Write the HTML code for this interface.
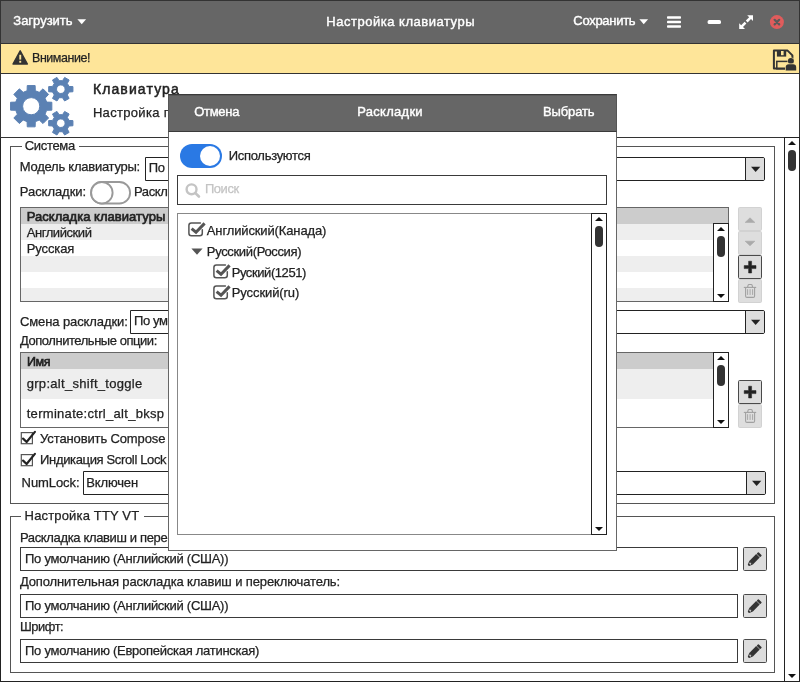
<!DOCTYPE html>
<html lang="ru">
<head>
<meta charset="utf-8">
<title>Настройка клавиатуры</title>
<style>
*{box-sizing:border-box;margin:0;padding:0}
html,body{width:800px;height:682px;overflow:hidden;background:#fff}
body{position:relative;font-family:"Liberation Sans","DejaVu Sans",sans-serif;font-size:13px;color:#222;line-height:16px}
.a{position:absolute}
.t{position:absolute;white-space:nowrap;color:#222;height:16px;line-height:16px;-webkit-text-stroke:.25px}
.w{color:#fff}
.box{position:absolute;border:1px solid #3a3a3a;background:#fff}
.combo{position:absolute;border:1px solid #222;background:#fff;border-radius:0 2px 2px 0;overflow:hidden}
.combo i{position:absolute;right:0;top:0;width:19px;background:#ddd;border-left:1px solid #222}
.btn{position:absolute;width:24px;height:24px;border:1px solid #4a4a4a;background:#ddd;border-radius:1.6px}
.btn.dis{border-color:#d2d2d2;background:#dedede}
.sb{position:absolute;width:16px;border:1px solid #222;background:#fff}
.sb .up{position:absolute;left:3px;top:3px;border:4px solid transparent;border-bottom:4px solid #111;border-top:0}
.sb .dn{position:absolute;left:3px;bottom:3px;border:4px solid transparent;border-top:4px solid #111;border-bottom:0}
.sb .th{position:absolute;left:3px;width:8px;border-radius:4px;background:#333}
.g1{background:#ccc}.g2{background:#eee}
</style>
</head>
<body>
<div id="root" style="position:absolute;left:0;top:0;width:800px;height:682px;will-change:transform">

<div class="a" style="left:0;top:0;width:800px;height:44px;background:#666;border:1px solid #333"></div>
<div class="t" style="left:13.3px;top:13px;letter-spacing:-0.01px;color:#fff;-webkit-text-stroke:.4px;">Загрузить</div>
<svg class="a" style="left:76px;top:18px" width="11" height="7" viewBox="0 0 11 7"><path d="M1.4 1.2 L10.1 1.2 L5.75 6.3 Z" fill="#fff"/></svg>
<div class="t" style="left:326.3px;top:14px;letter-spacing:0.52px;color:#fff;-webkit-text-stroke:.4px;">Настройка клавиатуры</div>
<div class="t" style="left:573.3px;top:13px;letter-spacing:-0.29px;color:#fff;-webkit-text-stroke:.4px;">Сохранить</div>
<svg class="a" style="left:638px;top:18px" width="11" height="7" viewBox="0 0 11 7"><path d="M1.4 1.2 L10.1 1.2 L5.75 6.3 Z" fill="#fff"/></svg>
<svg class="a" style="left:666px;top:14px" width="16" height="16" viewBox="0 0 16 16"><g fill="#fff"><rect x="1" y="2.3" width="14" height="2.5" rx=".8"/><rect x="1" y="6.8" width="14" height="2.5" rx=".8"/><rect x="1" y="11.3" width="14" height="2.5" rx=".8"/></g></svg>
<svg class="a" style="left:706px;top:14px" width="16" height="16" viewBox="0 0 16 16"><rect x="1.6" y="6.1" width="13.4" height="4" rx="1.6" fill="#fff"/></svg>
<svg class="a" style="left:738px;top:14px" width="16" height="16" viewBox="0 0 16 16"><g fill="#fff"><path d="M9.2 1.2 L15 1.2 L15 7 L13 5 L9.6 8.4 L7.8 6.6 L11.2 3.2 Z"/><path d="M7 15 L1.2 15 L1.2 9.2 L3.2 11.2 L6.6 7.8 L8.4 9.6 L5 13 Z"/></g></svg>
<svg class="a" style="left:769px;top:14px" width="16" height="16" viewBox="0 0 16 16"><circle cx="7.9" cy="8.1" r="7" fill="#e05c5c"/><path d="M5.6 5.8 L10.2 10.4 M10.2 5.8 L5.6 10.4" stroke="#5a5a5a" stroke-width="2.2" stroke-linecap="round"/></svg>
<div class="a" style="left:0;top:44px;width:800px;height:30px;background:#fee599;border-left:1px solid #333;border-right:1px solid #333;border-bottom:1px solid #333"></div>
<svg class="a" style="left:11px;top:49px" width="18" height="16" viewBox="0 0 18 16"><path d="M9.2 1.8 L16.4 15 L2 15 Z" fill="#333" stroke="#333" stroke-width="1.4" stroke-linejoin="round"/><rect x="8.3" y="5.8" width="1.9" height="4.8" fill="#fee599"/><rect x="8.3" y="11.8" width="1.9" height="1.9" fill="#fee599"/></svg>
<div class="t" style="left:31.6px;top:50px;letter-spacing:-0.45px;transform:scaleX(0.958);transform-origin:0 0;">Внимание!</div>
<svg class="a" style="left:772px;top:48px" width="27" height="23" viewBox="0 0 27 23"><path d="M1.9 2.6 H15.6 L20.4 7.4 V20.6 H1.9 Z" fill="none" stroke="#333" stroke-width="2" stroke-linejoin="round"/><rect x="4.9" y="2" width="9.3" height="6.6" fill="#333"/><rect x="9" y="3" width="2.6" height="4.2" fill="#fee599"/><rect x="4.8" y="13.4" width="12.6" height="7.4" fill="none" stroke="#333" stroke-width="1.5"/><circle cx="18.9" cy="13" r="3.5" fill="#fee599"/><circle cx="18.9" cy="13" r="3" fill="#333"/><path d="M13 22.9 V19.2 Q13 15.6 16.4 15.6 H21.4 Q24.8 15.6 24.8 19.2 V22.9 Z" fill="#fee599"/><path d="M13.7 22.6 V19.4 Q13.7 16.3 16.8 16.3 H21.1 Q24.2 16.3 24.2 19.4 V22.6 Z" fill="#333"/></svg>
<div class="a" style="left:0;top:74px;width:800px;height:64px;background:#fff;border-left:1px solid #333;border-right:1px solid #333;border-bottom:1px solid #333"></div>
<svg class="a" style="left:0;top:0" width="80" height="138" viewBox="0 0 80 138"><g fill="#5b81b3" fill-rule="evenodd" stroke="#5b81b3" stroke-width="1" stroke-linejoin="round"><path d="M46.67 102.10 L51.83 102.26 L51.83 110.14 L46.67 110.30 L45.04 114.24 L48.57 118.00 L43.00 123.57 L39.24 120.04 L35.30 121.67 L35.14 126.83 L27.26 126.83 L27.10 121.67 L23.16 120.04 L19.40 123.57 L13.83 118.00 L17.36 114.24 L15.73 110.30 L10.57 110.14 L10.57 102.26 L15.73 102.10 L17.36 98.16 L13.83 94.40 L19.40 88.83 L23.16 92.36 L27.10 90.73 L27.26 85.57 L35.14 85.57 L35.30 90.73 L39.24 92.36 L43.00 88.83 L48.57 94.40 L45.04 98.16 Z M22.60 106.20 a8.60 8.60 0 1 0 17.20 0 a8.60 8.60 0 1 0 -17.20 0 Z"/><path d="M69.05 86.43 L72.93 86.62 L72.93 91.78 L69.05 91.97 L67.33 94.95 L69.10 98.41 L64.63 100.99 L62.52 97.73 L59.08 97.73 L56.97 100.99 L52.50 98.41 L54.27 94.95 L52.55 91.97 L48.67 91.78 L48.67 86.62 L52.55 86.43 L54.27 83.45 L52.50 79.99 L56.97 77.41 L59.08 80.67 L62.52 80.67 L64.63 77.41 L69.10 79.99 L67.33 83.45 Z M56.50 89.20 a4.30 4.30 0 1 0 8.60 0 a4.30 4.30 0 1 0 -8.60 0 Z"/><path d="M69.05 120.43 L72.93 120.62 L72.93 125.78 L69.05 125.97 L67.33 128.95 L69.10 132.41 L64.63 134.99 L62.52 131.73 L59.08 131.73 L56.97 134.99 L52.50 132.41 L54.27 128.95 L52.55 125.97 L48.67 125.78 L48.67 120.62 L52.55 120.43 L54.27 117.45 L52.50 113.99 L56.97 111.41 L59.08 114.67 L62.52 114.67 L64.63 111.41 L69.10 113.99 L67.33 117.45 Z M56.50 123.20 a4.30 4.30 0 1 0 8.60 0 a4.30 4.30 0 1 0 -8.60 0 Z"/></g></svg>
<div class="t" style="left:92.9px;top:81px;letter-spacing:1.12px;font-size:14px;-webkit-text-stroke:.5px;">Клавиатура</div>
<div class="t" style="left:92.9px;top:105px;letter-spacing:0.32px;">Настройка параметров клавиатуры</div>
<div class="a" style="left:0;top:138px;width:800px;height:544px;background:#fff;border-left:1px solid #222;border-right:1px solid #222;border-bottom:1px solid #222"></div>
<div class="sb" style="left:784px;top:137px;height:545px"><div class="up"></div><div class="th" style="top:12px;height:21px"></div><div class="dn"></div></div>
<div class="a" style="left:10px;top:146px;width:765px;height:358px;border:1px solid #555"></div><div class="a" style="left:22px;top:145px;width:57px;height:3px;background:#fff"></div>
<div class="t" style="left:24.7px;top:138px;letter-spacing:-0.31px;">Система</div>
<div class="t" style="left:19.8px;top:159px;letter-spacing:-0.25px;">Модель клавиатуры:</div>
<div class="combo" style="left:145px;top:157px;width:620px;height:24px"><i style="height:22px"><svg class="a" style="left:0;top:0" width="18" height="22" viewBox="0 0 18 22"><path d="M5 8.8 L14.3 8.8 L9.65 14 Z" fill="#222"/></svg></i></div>
<div class="t" style="left:148.8px;top:160px;letter-spacing:-0.35px;">По умолчанию</div>
<div class="t" style="left:19.8px;top:184px;letter-spacing:-0.05px;">Раскладки:</div>
<svg class="a" style="left:89px;top:180px" width="44" height="26" viewBox="0 0 44 26"><rect x="2.1" y="2" width="39" height="21.5" rx="10.75" fill="#fff" stroke="#999" stroke-width="1.9"/><circle cx="12.85" cy="12.75" r="10.75" fill="#fff" stroke="#999" stroke-width="1.9"/></svg>
<div class="t" style="left:133.9px;top:184px;letter-spacing:-0.35px;">Раскладки по умолчанию</div>
<div class="a" style="left:20px;top:207px;width:709px;height:95px;border:1px solid #666;background:#fff"></div>
<div class="a g1" style="left:21px;top:208px;width:707px;height:16px"></div>
<div class="a g2" style="left:21px;top:224px;width:692px;height:16px"></div>
<div class="a g2" style="left:21px;top:256px;width:692px;height:16px"></div>
<div class="a g2" style="left:21px;top:288px;width:692px;height:13px"></div>
<div class="sb" style="left:713px;top:223px;height:79px"><div class="up"></div><div class="th" style="top:12px;height:21px"></div><div class="dn"></div></div>
<div class="t" style="left:26.7px;top:209px;letter-spacing:0.04px;-webkit-text-stroke:.65px;">Раскладка клавиатуры</div>
<div class="t" style="left:26.7px;top:225px;letter-spacing:-0.43px;">Английский</div>
<div class="t" style="left:26.7px;top:241px;letter-spacing:-0.11px;">Русская</div>
<div class="btn dis" style="left:738px;top:207px"><svg class="a" style="left:0;top:0" width="22" height="22" viewBox="0 0 22 22"><path d="M6.2 14.4 L11 9.8 L15.8 14.4 Z" fill="#aaa" stroke="#aaa" stroke-width=".6" stroke-linejoin="round"/></svg></div>
<div class="btn dis" style="left:738px;top:231px"><svg class="a" style="left:0;top:0" width="22" height="22" viewBox="0 0 22 22"><path d="M6.2 9.2 L11 13.8 L15.8 9.2 Z" fill="#aaa" stroke="#aaa" stroke-width=".6" stroke-linejoin="round"/></svg></div>
<div class="btn" style="left:738px;top:255px"><svg class="a" style="left:0;top:0" width="22" height="22" viewBox="0 0 22 22"><path d="M9.6 5.2 H12.6 V9.6 H17 V12.6 H12.6 V17 H9.6 V12.6 H5.2 V9.6 H9.6 Z" fill="#222" stroke="#222" stroke-width=".5" stroke-linejoin="round"/></svg></div>
<div class="btn dis" style="left:738px;top:279px"><svg class="a" style="left:0;top:0" width="22" height="22" viewBox="0 0 22 22"><g fill="none" stroke="#a0a0a0" stroke-width="1.1"><path d="M6.6 7.6 V16 Q6.6 17.4 8 17.4 H14.2 Q15.6 17.4 15.6 16 V7.6"/><path d="M4.8 7.4 H17.2"/><path d="M8.6 7.2 L9.2 4.9 Q9.4 4.5 9.9 4.5 H12.3 Q12.8 4.5 13 4.9 L13.6 7.2"/><path d="M8.6 9.2 V14.9 M11.1 9.2 V14.9 M13.6 9.2 V14.9" stroke-width=".9"/></g></svg></div>
<div class="t" style="left:19.9px;top:314px;letter-spacing:-0.09px;">Смена раскладки:</div>
<div class="combo" style="left:130px;top:310px;width:635px;height:24px"><i style="height:22px"><svg class="a" style="left:0;top:0" width="18" height="22" viewBox="0 0 18 22"><path d="M5 8.8 L14.3 8.8 L9.65 14 Z" fill="#222"/></svg></i></div>
<div class="t" style="left:133.9px;top:313px;letter-spacing:-0.35px;">По умолчанию</div>
<div class="t" style="left:19.9px;top:333px;letter-spacing:-0.45px;transform:scaleX(0.999);transform-origin:0 0;">Дополнительные опции:</div>
<div class="a" style="left:20px;top:352px;width:709px;height:76px;border:1px solid #666;background:#fff"></div>
<div class="a g1" style="left:21px;top:353px;width:707px;height:16px"></div>
<div class="a g2" style="left:21px;top:369px;width:692px;height:30px"></div>
<div class="sb" style="left:713px;top:352px;height:76px"><div class="up"></div><div class="th" style="top:12px;height:21px"></div><div class="dn"></div></div>
<div class="t" style="left:26.7px;top:354px;letter-spacing:-0.45px;-webkit-text-stroke:.65px;transform:scaleX(0.962);transform-origin:0 0;">Имя</div>
<div class="t" style="left:26.7px;top:376px;letter-spacing:0.30px;">grp:alt_shift_toggle</div>
<div class="t" style="left:26.7px;top:406px;letter-spacing:0.30px;">terminate:ctrl_alt_bksp</div>
<div class="btn" style="left:738px;top:380px"><svg class="a" style="left:0;top:0" width="22" height="22" viewBox="0 0 22 22"><path d="M9.6 5.2 H12.6 V9.6 H17 V12.6 H12.6 V17 H9.6 V12.6 H5.2 V9.6 H9.6 Z" fill="#222" stroke="#222" stroke-width=".5" stroke-linejoin="round"/></svg></div>
<div class="btn dis" style="left:738px;top:404px"><svg class="a" style="left:0;top:0" width="22" height="22" viewBox="0 0 22 22"><g fill="none" stroke="#a0a0a0" stroke-width="1.1"><path d="M6.6 7.6 V16 Q6.6 17.4 8 17.4 H14.2 Q15.6 17.4 15.6 16 V7.6"/><path d="M4.8 7.4 H17.2"/><path d="M8.6 7.2 L9.2 4.9 Q9.4 4.5 9.9 4.5 H12.3 Q12.8 4.5 13 4.9 L13.6 7.2"/><path d="M8.6 9.2 V14.9 M11.1 9.2 V14.9 M13.6 9.2 V14.9" stroke-width=".9"/></g></svg></div>
<svg class="a" style="left:18.8px;top:428.2px" width="19" height="18" viewBox="0 0 19 18"><rect x="2.3" y="4.6" width="11.1" height="11.1" fill="#fff" stroke="#555" stroke-width="1.2"/><path d="M4.1 10.6 L7.6 14 L15.9 3.9" fill="none" stroke="#222" stroke-width="2.2" stroke-linecap="round" stroke-linejoin="round"/></svg>
<div class="t" style="left:40.1px;top:431px;letter-spacing:-0.13px;">Установить Compose</div>
<svg class="a" style="left:18.8px;top:450.4px" width="19" height="18" viewBox="0 0 19 18"><rect x="2.3" y="4.6" width="11.1" height="11.1" fill="#fff" stroke="#555" stroke-width="1.2"/><path d="M4.1 10.6 L7.6 14 L15.9 3.9" fill="none" stroke="#222" stroke-width="2.2" stroke-linecap="round" stroke-linejoin="round"/></svg>
<div class="t" style="left:40.1px;top:452px;letter-spacing:-0.35px;">Индикация Scroll Lock</div>
<div class="t" style="left:21.6px;top:475px;letter-spacing:-0.08px;">NumLock:</div>
<div class="combo" style="left:83px;top:471px;width:683px;height:24px"><i style="height:22px"><svg class="a" style="left:0;top:0" width="18" height="22" viewBox="0 0 18 22"><path d="M5 8.8 L14.3 8.8 L9.65 14 Z" fill="#222"/></svg></i></div>
<div class="t" style="left:86.3px;top:475px;letter-spacing:-0.16px;">Включен</div>
<div class="a" style="left:10px;top:516px;width:765px;height:157px;border:1px solid #555"></div><div class="a" style="left:21px;top:515px;width:123px;height:3px;background:#fff"></div>
<div class="t" style="left:24.6px;top:508px;letter-spacing:0.16px;">Настройка TTY VT</div>
<div class="t" style="left:19.9px;top:530px;letter-spacing:-0.35px;">Раскладка клавиш и переключатель:</div>
<div class="box" style="left:20px;top:547px;width:718px;height:24px"></div>
<div class="t" style="left:25.0px;top:551px;letter-spacing:-0.27px;">По умолчанию (Английский (США))</div>
<div class="btn" style="left:743px;top:547px"><svg class="a" style="left:0;top:0" width="22" height="22" viewBox="0 0 22 22"><g transform="translate(10.2 11.6) rotate(45)"><rect x="-2.5" y="-8.4" width="5" height="2.5" rx=".7" fill="#333"/><rect x="-2.5" y="-5.3" width="5" height="9.7" fill="#333"/><path d="M-2.5 4.3 H2.5 L1 8 Q0 8.9 -1 8 Z" fill="#333"/><ellipse cx="0" cy="5.7" rx="1.1" ry=".8" fill="#ccc"/></g></svg></div>
<div class="t" style="left:19.9px;top:574px;letter-spacing:-0.12px;">Дополнительная раскладка клавиш и переключатель:</div>
<div class="box" style="left:20px;top:594px;width:718px;height:24px"></div>
<div class="t" style="left:25.0px;top:598px;letter-spacing:-0.27px;">По умолчанию (Английский (США))</div>
<div class="btn" style="left:743px;top:594px"><svg class="a" style="left:0;top:0" width="22" height="22" viewBox="0 0 22 22"><g transform="translate(10.2 11.6) rotate(45)"><rect x="-2.5" y="-8.4" width="5" height="2.5" rx=".7" fill="#333"/><rect x="-2.5" y="-5.3" width="5" height="9.7" fill="#333"/><path d="M-2.5 4.3 H2.5 L1 8 Q0 8.9 -1 8 Z" fill="#333"/><ellipse cx="0" cy="5.7" rx="1.1" ry=".8" fill="#ccc"/></g></svg></div>
<div class="t" style="left:19.9px;top:619px;letter-spacing:-0.45px;transform:scaleX(0.990);transform-origin:0 0;">Шрифт:</div>
<div class="box" style="left:20px;top:639px;width:718px;height:24px"></div>
<div class="t" style="left:25.0px;top:643px;letter-spacing:-0.27px;">По умолчанию (Европейская латинская)</div>
<div class="btn" style="left:743px;top:639px"><svg class="a" style="left:0;top:0" width="22" height="22" viewBox="0 0 22 22"><g transform="translate(10.2 11.6) rotate(45)"><rect x="-2.5" y="-8.4" width="5" height="2.5" rx=".7" fill="#333"/><rect x="-2.5" y="-5.3" width="5" height="9.7" fill="#333"/><path d="M-2.5 4.3 H2.5 L1 8 Q0 8.9 -1 8 Z" fill="#333"/><ellipse cx="0" cy="5.7" rx="1.1" ry=".8" fill="#ccc"/></g></svg></div>
<div class="a" style="left:168px;top:94px;width:449px;height:457px;background:#fff;border:1px solid #666"></div>
<div class="a" style="left:168px;top:94px;width:449px;height:38px;background:#666;border:1px solid #3a3a3a;border-left-color:#555;border-right-color:#555"></div>
<div class="a" style="left:169px;top:95px;width:447px;height:1px;background:#585858"></div>
<div class="t" style="left:194.2px;top:104px;letter-spacing:-0.29px;color:#fff;-webkit-text-stroke:.4px;">Отмена</div>
<div class="t" style="left:357.3px;top:104px;letter-spacing:0.27px;color:#fff;-webkit-text-stroke:.4px;">Раскладки</div>
<div class="t" style="left:543.0px;top:104px;letter-spacing:-0.13px;color:#fff;-webkit-text-stroke:.4px;">Выбрать</div>
<div class="a" style="left:180px;top:144px;width:42px;height:24px;border-radius:12px;background:#2a79e4"></div>
<div class="a" style="left:200px;top:146px;width:20px;height:20px;border-radius:10px;background:#fff"></div>
<div class="t" style="left:228.7px;top:148px;letter-spacing:-0.29px;">Используются</div>
<div class="box" style="left:177px;top:175px;width:430px;height:30px"></div>
<svg class="a" style="left:184px;top:182px" width="18" height="18" viewBox="0 0 18 18"><circle cx="7.55" cy="7.3" r="4.95" fill="none" stroke="#c4c4c4" stroke-width="2.4"/><path d="M11.4 11.1 L14.9 14.5" stroke="#c4c4c4" stroke-width="2.7" stroke-linecap="round"/></svg>
<div class="t" style="left:204.9px;top:181px;letter-spacing:-0.45px;color:#c4c4c4;transform:scaleX(0.996);transform-origin:0 0;">Поиск</div>
<div class="a" style="left:177px;top:213px;width:430px;height:322px;border:1px solid #888;background:#fff"></div>
<div class="sb" style="left:591px;top:213px;height:322px"><div class="up"></div><div class="th" style="top:12px;height:21px"></div><div class="dn"></div></div>
<svg class="a" style="left:187px;top:220px" width="21" height="18" viewBox="0 0 21 18"><path d="M15.3 9.8 V13.2 Q15.3 15.7 12.8 15.7 H4.4 Q1.9 15.7 1.9 13.2 V5.4 Q1.9 2.9 4.4 2.9 H13.4" fill="none" stroke="#555" stroke-width="1.5" stroke-linecap="round"/><path d="M4.6 8.6 L9 12.2 L17.6 3.4" fill="none" stroke="#555" stroke-width="3" stroke-linejoin="miter"/></svg>
<div class="t" style="left:206.8px;top:223px;letter-spacing:-0.13px;">Английский(Канада)</div>
<svg class="a" style="left:191px;top:248px" width="12" height="7" viewBox="0 0 12 7"><path d="M0.4 0.5 L11.6 0.5 L6 6.8 Z" fill="#555"/></svg>
<div class="t" style="left:206.8px;top:244px;letter-spacing:-0.34px;">Русский(Россия)</div>
<svg class="a" style="left:212px;top:262px" width="21" height="18" viewBox="0 0 21 18"><path d="M15.3 9.8 V13.2 Q15.3 15.7 12.8 15.7 H4.4 Q1.9 15.7 1.9 13.2 V5.4 Q1.9 2.9 4.4 2.9 H13.4" fill="none" stroke="#555" stroke-width="1.5" stroke-linecap="round"/><path d="M4.6 8.6 L9 12.2 L17.6 3.4" fill="none" stroke="#555" stroke-width="3" stroke-linejoin="miter"/></svg>
<div class="t" style="left:231.7px;top:265px;letter-spacing:-0.42px;">Руский(1251)</div>
<svg class="a" style="left:212px;top:283px" width="21" height="18" viewBox="0 0 21 18"><path d="M15.3 9.8 V13.2 Q15.3 15.7 12.8 15.7 H4.4 Q1.9 15.7 1.9 13.2 V5.4 Q1.9 2.9 4.4 2.9 H13.4" fill="none" stroke="#555" stroke-width="1.5" stroke-linecap="round"/><path d="M4.6 8.6 L9 12.2 L17.6 3.4" fill="none" stroke="#555" stroke-width="3" stroke-linejoin="miter"/></svg>
<div class="t" style="left:231.7px;top:285px;letter-spacing:-0.08px;">Русский(ru)</div>
</div>
</body>
</html>
